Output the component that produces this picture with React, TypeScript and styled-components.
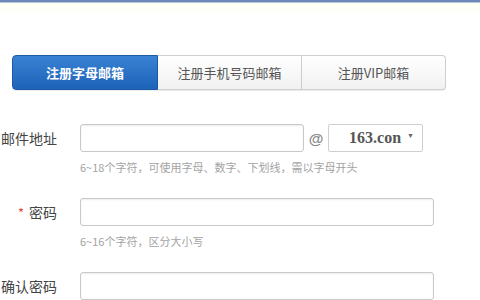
import React from 'react'
import styled, { createGlobalStyle } from 'styled-components'

const GlobalStyle = createGlobalStyle`
    html, body {
        margin: 0;
        padding: 0;
        background: #ffffff;
    }
    body {
        font-family: "Noto Sans CJK SC", "Liberation Sans", sans-serif;
    }
`

const tabs = ['注册字母邮箱', '注册手机号码邮箱', '注册VIP邮箱']

export default function App() {
    return (
        <>
            <GlobalStyle />
            <Page>
                <TopBar />
                <Glow />
                <TabBar>
                    {tabs.map((t, i) => (
                        <Tab key={t} $active={i === 0} $first={i === 0} $last={i === tabs.length - 1}>
                            {t}
                        </Tab>
                    ))}
                </TabBar>
                <Form>
                    <Row>
                        <Label>邮件地址</Label>
                        <Field>
                            <EmailLine>
                                <Input $width={222} />
                                <At>@</At>
                                <Select>
                                    163.con <Caret>▼</Caret>
                                </Select>
                            </EmailLine>
                            <Hint>6~18个字符，可使用字母、数字、下划线，需以字母开头</Hint>
                        </Field>
                    </Row>
                    <Row>
                        <Label>
                            <Star>*</Star>密码
                        </Label>
                        <Field>
                            <Input $width={352} />
                            <Hint>6~16个字符，区分大小写</Hint>
                        </Field>
                    </Row>
                    <Row>
                        <Label>确认密码</Label>
                        <Field>
                            <Input $width={352} />
                        </Field>
                    </Row>
                </Form>
            </Page>
        </>
    )
}

const Page = styled.div`
    width: 480px;
    height: 300px;
    overflow: hidden;
    background: #ffffff;
`
const TopBar = styled.div`
    height: 2px;
    background: #6d88b6;
    border-bottom: 1px solid #b7c6de;
`
const Glow = styled.div`
    height: 12px;
    background: linear-gradient(#fdfdf0, #ffffff);
`
const TabBar = styled.div`
    display: flex;
    margin: 40px 0 0 12px;
    width: 434px;
    height: 35px;
`
const Tab = styled.div<{ $active: boolean; $first: boolean; $last: boolean }>`
    flex: ${p => (p.$first ? '0 0 144px' : '1')};
    display: flex;
    align-items: center;
    justify-content: center;
    font-size: 13px;
    font-weight: ${p => (p.$active ? 700 : 400)};
    color: ${p => (p.$active ? '#ffffff' : '#555555')};
    background: ${p =>
        p.$active
            ? 'linear-gradient(#3a82d4, #1d63b8)'
            : 'linear-gradient(#ffffff, #f1f1f1)'};
    border: 1px solid ${p => (p.$active ? '#1c5aa6' : '#cfcfcf')};
    border-left: ${p => (p.$first || p.$active ? undefined : 'none')};
    border-radius: ${p => (p.$first ? '4px 0 0 4px' : p.$last ? '0 4px 4px 0' : '0')};
    box-shadow: 0 1px 1px rgba(0, 0, 0, 0.08);
`
const Form = styled.div`
    display: flex;
    flex-direction: column;
    margin-top: 34px;
    gap: 23px;
`
const Row = styled.div`
    display: flex;
    align-items: flex-start;
`
const Label = styled.div`
    width: 57px;
    flex: 0 0 57px;
    margin-right: 23px;
    display: flex;
    justify-content: flex-end;
    align-items: center;
    white-space: nowrap;
    height: 28px;
    font-size: 14px;
    color: #444444;
`
const Star = styled.span`
    color: #e24a3b;
    font-size: 13px;
    margin-right: 5px;
`
const Field = styled.div`
    display: flex;
    flex-direction: column;
`
const EmailLine = styled.div`
    display: flex;
    align-items: center;
`
const Input = styled.div<{ $width: number }>`
    width: ${p => p.$width}px;
    height: 26px;
    box-sizing: content-box;
    border: 1px solid #c9c9c9;
    border-radius: 3px;
    background: #ffffff;
    box-shadow: inset 0 1px 2px rgba(0, 0, 0, 0.08);
`
const At = styled.span`
    width: 24px;
    text-align: center;
    font-size: 15px;
    font-weight: 700;
    color: #8a8a8a;
    font-family: "Liberation Sans", sans-serif;
`
const Select = styled.div`
    width: 95px;
    height: 28px;
    border: 1px solid #cfcfcf;
    border-radius: 2px;
    display: flex;
    align-items: center;
    justify-content: flex-end;
    padding-right: 8px;
    box-sizing: border-box;
    font-family: "Liberation Serif", serif;
    font-weight: 700;
    font-size: 16px;
    color: #555555;
`
const Caret = styled.span`
    font-size: 7px;
    margin-left: 6px;
    margin-top: -4px;
    color: #666666;
`
const Hint = styled.div`
    margin-top: 7px;
    font-size: 11px;
    color: #a3a3a3;
    white-space: nowrap;
`
